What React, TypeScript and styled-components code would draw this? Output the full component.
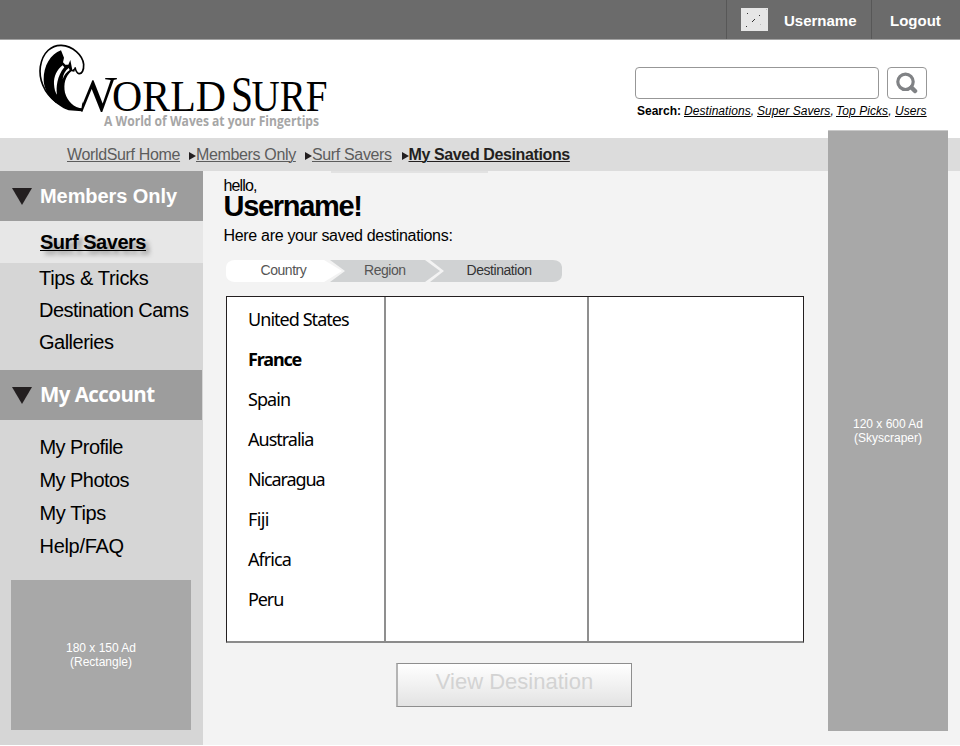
import React from "react";
import styled, { createGlobalStyle, css } from "styled-components";

const GlobalStyle = createGlobalStyle`
  * { box-sizing: border-box; }
  body {
    margin: 0;
    background: #fff;
    font-family: "Liberation Sans", Arial, Helvetica, sans-serif;
    color: #000;
  }
  a { color: inherit; }
`;

const Page = styled.div`
  position: relative;
  width: 960px;
  height: 745px;
  display: flex;
  flex-direction: column;
  overflow: hidden;
`;

const TopBar = styled.nav`
  flex: none;
  height: 40px;
  display: flex;
  justify-content: flex-end;
  background: #6b6b6b;
  border-bottom: 1px solid #a3a3a3;
`;

const TopItem = styled.div<{ $width: number; $pad: number }>`
  display: flex;
  width: ${(p) => p.$width}px;
  padding-left: ${(p) => p.$pad}px;
  border-left: 1px solid #575757;
  color: #fff;
  font-weight: bold;
  font-size: 15px;
  line-height: 42px;
`;

const Avatar = styled.svg`
  flex: none;
  width: 27px;
  height: 23px;
  margin: 8px 16px 0 0;
`;

const Header = styled.header`
  flex: none;
  height: 98px;
  display: flex;
  justify-content: space-between;
  background: #fff;
`;

const Logo = styled.svg`
  display: block;
  width: 300px;
  height: 96px;
  margin-left: 36px;
  font-family: "Liberation Serif", "Times New Roman", serif;
`;

const Tagline = styled.text`
  font: bold 14.5px "Open Sans", sans-serif;
  fill: #a6a6a6;
`;

const SearchArea = styled.div`
  width: 325px;
  padding-top: 27px;
`;

const SearchRow = styled.form`
  display: flex;
  gap: 8px;
`;

const searchBox = css`
  height: 32px;
  border: 1px solid #979797;
  border-radius: 4px;
  background: #fff;
`;

const SearchInput = styled.input`
  ${searchBox}
  width: 244px;
  outline: none;
`;

const SearchButton = styled.button`
  ${searchBox}
  width: 40px;
  padding: 0;
  display: grid;
  place-items: center;
`;

const SearchLinks = styled.div`
  display: flex;
  margin: 4px 0 0 2px;
  font-size: 12px;
  line-height: 16px;
  white-space: nowrap;
`;

const SearchLabel = styled.b`
  width: 47px;
`;

const SearchLink = styled.span<{ $width: number }>`
  width: ${(p) => p.$width}px;
  font-style: italic;
  letter-spacing: 0.06px;
`;

const Breadcrumb = styled.nav`
  flex: none;
  height: 33px;
  display: flex;
  padding-left: 67px;
  background: #dcdcdc;
  font-size: 16px;
  line-height: 33px;
  letter-spacing: -0.35px;
  white-space: nowrap;
  color: #5c5c5c;
  a { text-underline-offset: 1px; text-decoration-thickness: 1px; }
`;

const Crumb = styled.span<{ $width: number; $current?: boolean }>`
  display: flex;
  align-items: center;
  width: ${(p) => p.$width}px;
  ${(p) => p.$current && css`color: #231f20; font-weight: bold; letter-spacing: -0.38px;`}
`;

const CrumbArrow = styled.svg`
  flex: none;
  width: 7px;
  height: 8px;
  margin-top: 2px;
`;

const Body = styled.div`
  flex: 1;
  display: flex;
  min-height: 0;
  background: #f3f3f3;
`;

const Sidebar = styled.aside`
  flex: none;
  width: 203px;
  display: flex;
  flex-direction: column;
  background: #d6d6d6;
`;

const SectionHead = styled.div<{ $humanist?: boolean }>`
  flex: none;
  display: flex;
  width: ${(p) => (p.$humanist ? 202 : 203)}px;
  height: 50px;
  padding-left: 12px;
  background: #9d9d9d;
  color: #fff;
  font-weight: bold;
  font-size: 20px;
  line-height: 50px;
  letter-spacing: -0.07px;
  ${(p) =>
    p.$humanist &&
    css`
      font-family: "Open Sans", sans-serif;
      font-size: 20.5px;
      letter-spacing: -0.55px;
      line-height: 49px;
    `}
`;

const SectionArrow = styled.svg`
  flex: none;
  width: 20px;
  height: 17px;
  margin: 17px 8px 0 0;
`;

const ActiveItem = styled.div`
  flex: none;
  height: 42px;
  padding-left: 40px;
  background: #e7e7e7;
  font-weight: bold;
  font-size: 20px;
  line-height: 42px;
  letter-spacing: -0.47px;
  text-shadow: 4px 4px 4px rgba(0, 0, 0, 0.35);
  a { text-decoration-thickness: 1px; text-underline-offset: 1px; }
`;

const NavList = styled.div<{ $height: number; $top: number; $left: number; $step: number }>`
  flex: none;
  height: ${(p) => p.$height}px;
  padding: ${(p) => p.$top}px 0 0 ${(p) => p.$left}px;
  font-size: 20px;
  line-height: ${(p) => p.$step}px;
  white-space: nowrap;
`;

const NavItem = styled.div<{ $spacing: number }>`
  letter-spacing: ${(p) => p.$spacing}px;
`;

const Ad = styled.div`
  display: flex;
  flex-direction: column;
  justify-content: center;
  text-align: center;
  background: #a8a8a8;
  color: #fff;
  font-size: 12px;
  line-height: 14px;
`;

const RectangleAd = styled(Ad)`
  flex: none;
  width: 180px;
  height: 150px;
  margin-left: 11px;
`;

const SkyscraperAd = styled(Ad)`
  position: absolute;
  left: 828px;
  top: 130px;
  width: 120px;
  height: 601px;
  border-top: 1px solid #c9c9c9;
`;

const Main = styled.main`
  width: 625px;
  padding-left: 20.5px;
`;

const TabEdge = styled.div`
  width: 157px;
  height: 2px;
  margin-left: 107.5px;
  background: #e2e2e2;
`;

const Hello = styled.div`
  height: 18px;
  margin-top: 3px;
  font-size: 16px;
  line-height: 20px;
  letter-spacing: -0.85px;
`;

const UserTitle = styled.h1`
  margin: 0;
  height: 29px;
  font-size: 29px;
  line-height: 24px;
  letter-spacing: -1.3px;
`;

const Intro = styled.p`
  margin: 0;
  height: 37px;
  font-size: 16px;
  line-height: 26px;
  letter-spacing: -0.31px;
`;

const Steps = styled.div`
  display: flex;
  margin-left: 2.5px;
  font-size: 14px;
  line-height: 21px;
  letter-spacing: -0.45px;
`;

const Step = styled.div<{ $kind: "first" | "middle" | "last"; $width: number; $pad: number }>`
  width: ${(p) => p.$width}px;
  height: 22px;
  padding-left: ${(p) => p.$pad}px;
  background: ${(p) => (p.$kind === "first" ? "#fff" : "#d0d2d3")};
  color: ${(p) => (p.$kind === "last" ? "#333" : "#555")};
  ${(p) =>
    p.$kind === "first" &&
    css`
      border-radius: 9px 0 0 9px / 7px 0 0 7px;
      clip-path: polygon(0 0, 98px 0, 100% 50%, 98px 100%, 0 100%);
    `}
  ${(p) =>
    p.$kind === "middle" &&
    css`
      margin-left: -12px;
      clip-path: polygon(0 0, 95px 0, 100% 50%, 95px 100%, 0 100%, 15px 50%);
    `}
  ${(p) =>
    p.$kind === "last" &&
    css`
      margin-left: -10px;
      border-radius: 0 9px 9px 0 / 0 7px 7px 0;
      clip-path: polygon(0 0, 100% 0, 100% 100%, 0 100%, 14px 50%);
    `}
`;

const Browser = styled.div`
  display: grid;
  grid-template-columns: 159px 203px 1fr;
  width: 578px;
  height: 347px;
  margin: 14px 0 0 2.5px;
  background: #fff;
  border: 1px solid #231f20;
  border-bottom: 2px solid #8b8b8b;
`;

const Column = styled.ul`
  margin: 0;
  padding: 2px 0 0 21px;
  list-style: none;
  border-right: 2px solid #8f8f8f;
  &:last-child { border-right: 0; }
`;

const Country = styled.li<{ $selected?: boolean; $spacing: number }>`
  height: 40px;
  font-family: "Noto Sans", "Open Sans", sans-serif;
  font-size: 18px;
  line-height: 40px;
  white-space: nowrap;
  font-weight: ${(p) => (p.$selected ? 700 : 400)};
  letter-spacing: ${(p) => p.$spacing}px;
`;

const ViewButton = styled.button`
  display: block;
  width: 236px;
  height: 44px;
  margin: 20px 0 0 172.5px;
  padding: 0 0 7px;
  border: 1px solid #8e8e8e;
  border-left: 2px solid #b4b4b4;
  background: linear-gradient(#fff, #e3e3e3);
  color: #d3d3d3;
  font: 22px/36px "Liberation Sans", Arial, sans-serif;
`;

const crumbs = [
  { label: "WorldSurf Home", width: 122 },
  { label: "Members Only", width: 116 },
  { label: "Surf Savers", width: 96.5 },
  { label: "My Saved Desinations", width: 170 },
];

const searchLinks = [
  { label: "Destinations", width: 73 },
  { label: "Super Savers", width: 79 },
  { label: "Top Picks", width: 59 },
  { label: "Users", width: 32 },
];

const memberLinks = [
  { label: "Tips & Tricks", spacing: -0.33 },
  { label: "Destination Cams", spacing: -0.53 },
  { label: "Galleries", spacing: -0.5 },
];

const accountLinks = [
  { label: "My Profile", spacing: -0.55 },
  { label: "My Photos", spacing: -0.55 },
  { label: "My Tips", spacing: -0.35 },
  { label: "Help/FAQ", spacing: -0.3 },
];

const countries = [
  { name: "United States", spacing: -0.95 },
  { name: "France", spacing: -1.15 },
  { name: "Spain", spacing: -0.95 },
  { name: "Australia", spacing: -1.0 },
  { name: "Nicaragua", spacing: -1.13 },
  { name: "Fiji", spacing: -0.6 },
  { name: "Africa", spacing: -0.95 },
  { name: "Peru", spacing: -1.1 },
];

function WorldSurfLogo() {
  return (
    <Logo viewBox="36 40 300 96">
      <clipPath id="w-strokes">
        <path d="M84 70V92L81.500 108V113H130V70Z" />
      </clipPath>
      <g transform="translate(36 40) scale(0.3333)">
        <path
          d="M62 188 C22 158 8 115 13 80 C20 35 48 15 76 16 C110 18 140 45 143 73 C144 92 137 102 129 101 C121 99 119 91 117 82"
          fill="none"
          stroke="#000"
          strokeWidth="5"
        />
        <path d="M75 31 C44 42 22 78 23 120 C24 160 58 196 98 211 L138 214 L141 205 C112 203 95 184 87 158 C82 132 88 109 106 94 L115 95 L119 82 L109 90 L103 60 L97 74 L88 74 L81 67 L84 53 Z" />
        <path
          d="M80 76 C62 90 53 110 54 132 C55 148 58 157 63 164 C60 142 63 108 85 82 Z M98 84 C87 92 81 104 80 118 C84 105 92 96 101 90 Z"
          fill="#fff"
        />
      </g>
      <text x="66" y="110.500" fontSize="51" textLength="51" lengthAdjust="spacingAndGlyphs" clipPath="url(#w-strokes)">W</text>
      <text x="112" y="110.500" fontSize="44.500" textLength="114" lengthAdjust="spacingAndGlyphs">ORLD</text>
      <text x="231" y="110.500" fontSize="51" textLength="22" lengthAdjust="spacingAndGlyphs">S</text>
      <text x="251.500" y="110.500" fontSize="44.500" textLength="76" lengthAdjust="spacingAndGlyphs">URF</text>
      <Tagline x="104" y="126" textLength="215" lengthAdjust="spacingAndGlyphs">
        A World of Waves at your Fingertips
      </Tagline>
    </Logo>
  );
}

export default function App() {
  return (
    <>
      <GlobalStyle />
      <Page>
        <TopBar>
          <TopItem $width={145} $pad={14}>
            <Avatar viewBox="0 0 27 23">
              <rect width="27" height="23" fill="#e6e6e6" />
              <path d="M6 5h1v1h-1zM18 7h1v1h-1zM5 18h1v1h-1zM11 13h1v1h-1zM12 12h1v1h-1zM13 11h1v1h-1z" fill="#333" />
              <path d="M19 16h1v1h-1zM25 1h1v1h-1z" fill="#bbb" />
            </Avatar>
            Username
          </TopItem>
          <TopItem $width={89} $pad={18}>Logout</TopItem>
        </TopBar>

        <Header>
          <WorldSurfLogo />
          <SearchArea>
            <SearchRow>
              <SearchInput aria-label="Search" />
              <SearchButton type="button" aria-label="Search">
                <svg width="22" height="22" viewBox="0 0 22 22" fill="none" stroke="#808285">
                  <circle cx="9.500" cy="9.800" r="7.700" strokeWidth="3.200" />
                  <path d="M15.500 15.500l3.500 3.500" strokeWidth="4.500" strokeLinecap="round" />
                </svg>
              </SearchButton>
            </SearchRow>
            <SearchLinks>
              <SearchLabel>Search:</SearchLabel>
              {searchLinks.map((l, i) => (
                <SearchLink key={l.label} $width={l.width}>
                  <u>{l.label}</u>
                  {i < searchLinks.length - 1 && ","}
                </SearchLink>
              ))}
            </SearchLinks>
          </SearchArea>
        </Header>

        <Breadcrumb>
          {crumbs.map((c, i) => (
            <Crumb key={c.label} $width={c.width} $current={i === 3}>
              {i > 0 && (
                <CrumbArrow viewBox="0 0 7 8">
                  <path d="M0 0L7 4L0 8Z" fill="#231f20" />
                </CrumbArrow>
              )}
              <a href="#">{c.label}</a>
            </Crumb>
          ))}
        </Breadcrumb>

        <Body>
          <Sidebar>
            <SectionHead>
              <SectionArrow viewBox="0 0 20 17">
                <path d="M0 0H20L10 17Z" fill="#231f20" />
              </SectionArrow>
              Members Only
            </SectionHead>
            <ActiveItem>
              <a href="#">Surf Savers</a>
            </ActiveItem>
            <NavList $height={107} $top={0} $left={39} $step={31.8}>
              {memberLinks.map((l) => (
                <NavItem key={l.label} $spacing={l.spacing}>{l.label}</NavItem>
              ))}
            </NavList>
            <SectionHead $humanist>
              <SectionArrow viewBox="0 0 20 17">
                <path d="M0 0H20L10 17Z" fill="#231f20" />
              </SectionArrow>
              My Account
            </SectionHead>
            <NavList $height={160} $top={10.5} $left={39.5} $step={33.3}>
              {accountLinks.map((l) => (
                <NavItem key={l.label} $spacing={l.spacing}>{l.label}</NavItem>
              ))}
            </NavList>
            <RectangleAd>
              <div>180 x 150 Ad</div>
              <div>(Rectangle)</div>
            </RectangleAd>
          </Sidebar>

          <Main>
            <TabEdge />
            <Hello>hello,</Hello>
            <UserTitle>Username!</UserTitle>
            <Intro>Here are your saved destinations:</Intro>
            <Steps>
              <Step $kind="first" $width={116} $pad={34.5}>Country</Step>
              <Step $kind="middle" $width={110} $pad={34}>Region</Step>
              <Step $kind="last" $width={132} $pad={36.5}>Destination</Step>
            </Steps>
            <Browser>
              <Column>
                {countries.map((c) => (
                  <Country key={c.name} $selected={c.name === "France"} $spacing={c.spacing}>
                    {c.name}
                  </Country>
                ))}
              </Column>
              <Column />
              <Column />
            </Browser>
            <ViewButton>View Desination</ViewButton>
          </Main>
        </Body>

        <SkyscraperAd>
          <div>120 x 600 Ad</div>
          <div>(Skyscraper)</div>
        </SkyscraperAd>
      </Page>
    </>
  );
}
